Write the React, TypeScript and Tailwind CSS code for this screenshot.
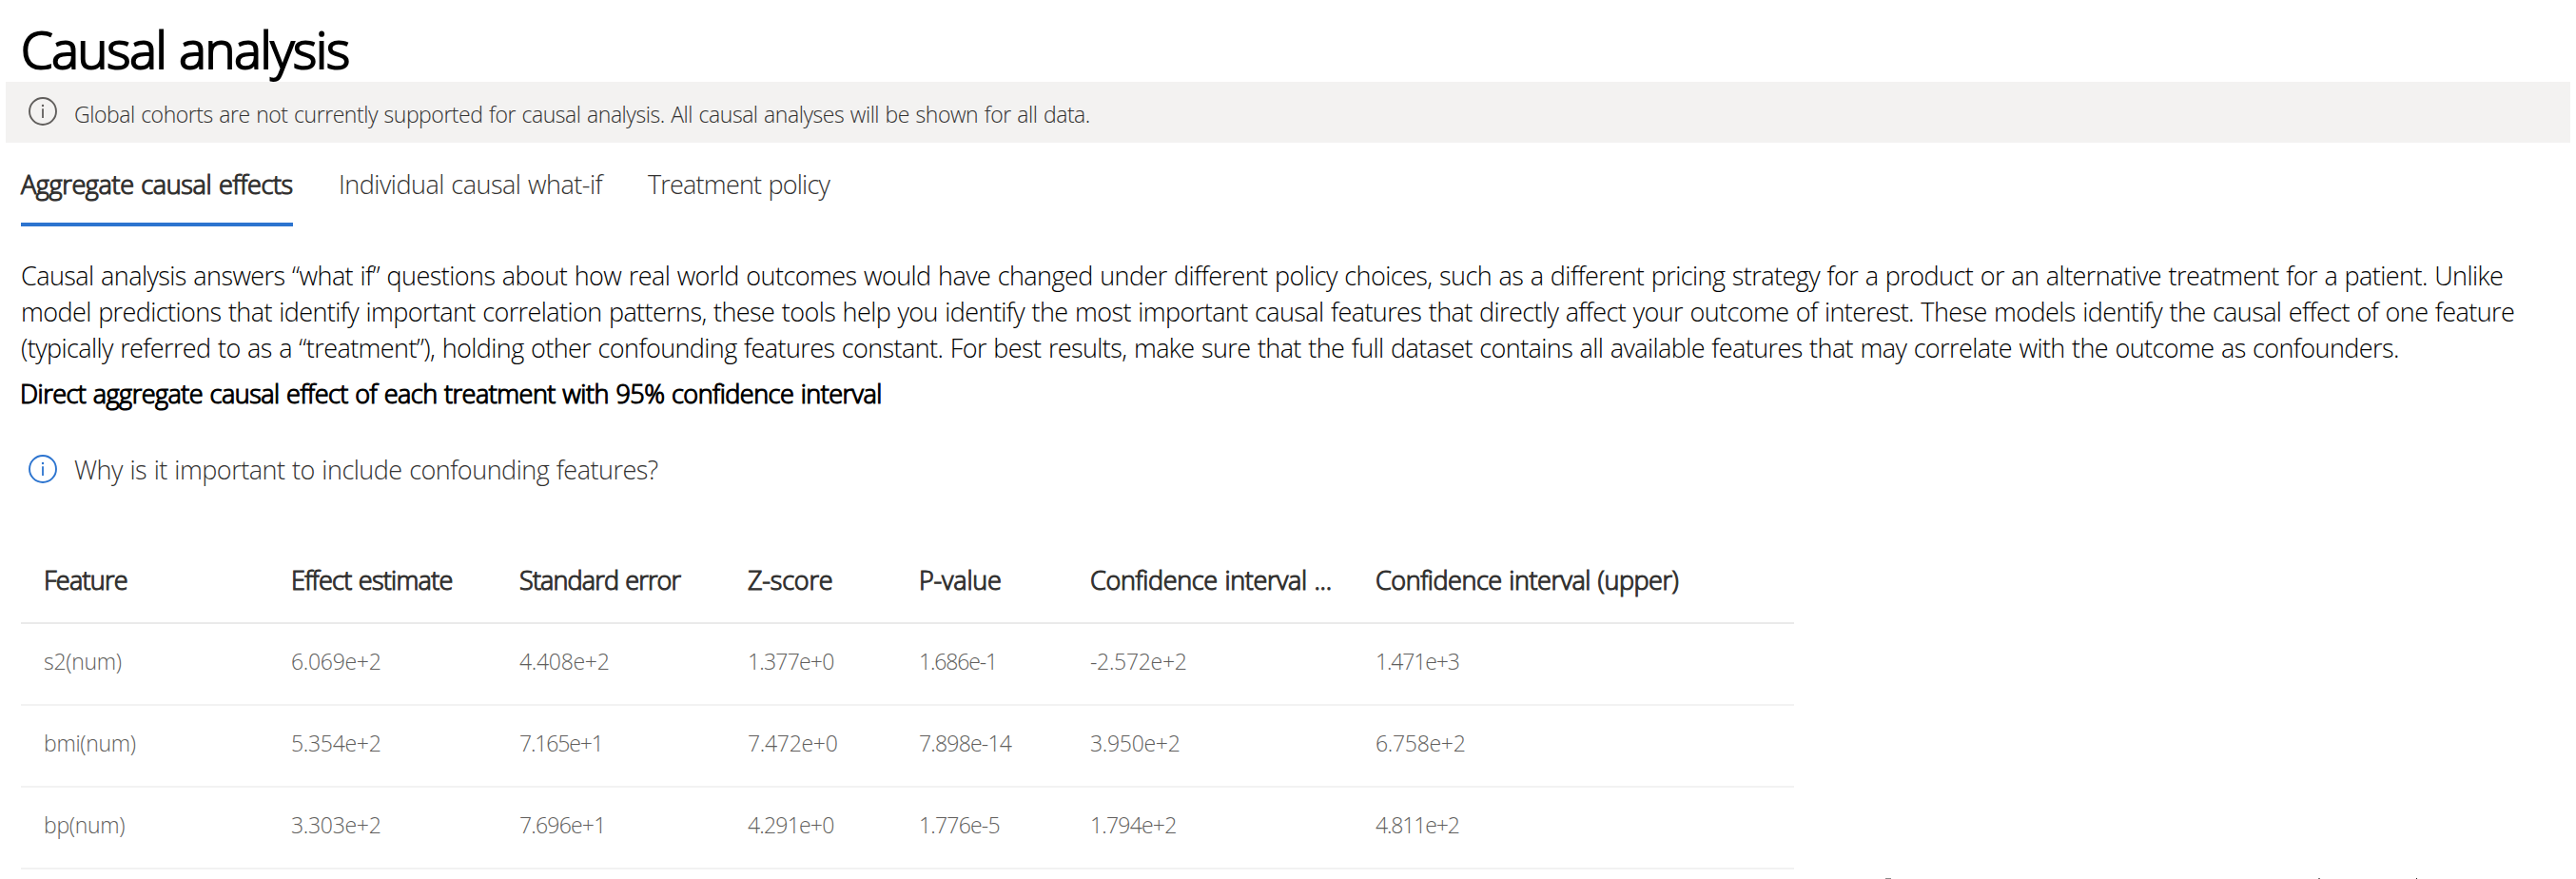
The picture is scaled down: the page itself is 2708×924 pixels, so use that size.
type Cell = { text: string; tracking: string };

const columns: Cell[] = [
  { text: "Feature", tracking: "tracking-[-0.75px]" },
  { text: "Effect estimate", tracking: "tracking-[-0.72px]" },
  { text: "Standard error", tracking: "tracking-[-0.85px]" },
  { text: "Z-score", tracking: "tracking-[-0.2px]" },
  { text: "P-value", tracking: "tracking-[-0.2px]" },
  { text: "Confidence interval ...", tracking: "tracking-[-0.35px]" },
  { text: "Confidence interval (upper)", tracking: "tracking-[-0.45px]" },
];

const rows: string[][] = [
  ["s2(num)", "6.069e+2", "4.408e+2", "1.377e+0", "1.686e-1", "-2.572e+2", "1.471e+3"],
  ["bmi(num)", "5.354e+2", "7.165e+1", "7.472e+0", "7.898e-14", "3.950e+2", "6.758e+2"],
  ["bp(num)", "3.303e+2", "7.696e+1", "4.291e+0", "1.776e-5", "1.794e+2", "4.811e+2"],
];

const digitTracking = ["tracking-[-0.3px]", "tracking-[-0.8px]", "tracking-[-1.15px]"];

const gridColumns = "grid grid-cols-[260px_240px_240px_180px_180px_300px_1fr] pl-6";

function trackingFor(value: string) {
  const ones = value.split("1").length - 1;
  return digitTracking[Math.min(ones, 2)];
}

function InfoIcon({ className }: { className: string }) {
  return (
    <svg viewBox="0 0 30 30" className={`size-[30px] shrink-0 ${className}`} fill="none" stroke="currentColor">
      <circle cx="15" cy="15" r="14" strokeWidth="1.9" />
      <path d="M15 12.2V22" strokeWidth="1.8" />
      <circle cx="15" cy="9" r="1.2" fill="currentColor" stroke="none" />
    </svg>
  );
}

export default function App() {
  return (
    <main className="flex h-[924px] w-[2708px] flex-col overflow-hidden bg-white font-['Open_Sans',sans-serif] text-[27px] leading-[38px] font-light text-[#323130] [word-spacing:1px]">
      <h1 className="mt-4 h-[70px] pl-[22px] text-[54px] leading-[70px] font-light tracking-[-1.25px] whitespace-nowrap text-black [-webkit-text-stroke:2.1px]">
        Causal analysis
      </h1>
      <div className="mx-[6px] flex h-16 shrink-0 items-start bg-[#f3f2f1] pl-6 text-[23px] leading-8 tracking-[-0.46px]">
        <InfoIcon className="mt-4 text-[#605e5c]" />
        <span className="mt-[18px] ml-[18px]">
          Global cohorts are not currently supported for causal analysis. All causal analyses will be shown for all data.
        </span>
      </div>

      <nav className="mt-6 flex h-16 shrink-0 pl-[22px] whitespace-nowrap">
        <div className="w-[286px] border-b-4 border-[#2c74cf] pt-px tracking-[-0.35px] [-webkit-text-stroke:1.15px]">Aggregate causal effects</div>
        <div className="ml-[48px] w-[278px] pt-px tracking-[-0.5px]">Individual causal what-if</div>
        <div className="ml-[47px] pt-px tracking-[-0.8px]">Treatment policy</div>
      </nav>

      <p className="mt-[33px] pl-[22px] whitespace-nowrap text-black">
        <span className="block tracking-[-0.565px]">
          Causal analysis answers “what if” questions about how real world outcomes would have changed under different policy choices, such as a different pricing strategy for a product or an alternative treatment for a patient. Unlike
        </span>
        <span className="block tracking-[-0.595px]">
          model predictions that identify important correlation patterns, these tools help you identify the most important causal features that directly affect your outcome of interest. These models identify the causal effect of one feature
        </span>
        <span className="block tracking-[-0.595px]">
          (typically referred to as a “treatment”), holding other confounding features constant. For best results, make sure that the full dataset contains all available features that may correlate with the outcome as confounders.
        </span>
      </p>
      <h2 className="mt-[10px] pl-[21px] font-light tracking-[-0.51px] text-black [-webkit-text-stroke:1.15px]">
        Direct aggregate causal effect of each treatment with 95% confidence interval
      </h2>

      <div className="mt-[45px] flex h-[30px] shrink-0 items-center pl-[30px] tracking-[-0.5px]">
        <InfoIcon className="text-[#2c74cf]" />
        <span className="ml-[18px] pt-[2px]">Why is it important to include confounding features?</span>
      </div>

      <section className="mt-[57px] ml-[22px] w-[1864px]">
        <div className={`${gridColumns} h-[91px] items-center border-b-2 border-[#eaeaea] pt-px whitespace-nowrap [-webkit-text-stroke:1.1px]`}>
          {columns.map((c) => (
            <div key={c.text} className={c.tracking}>{c.text}</div>
          ))}
        </div>
        {rows.map((row) => (
          <div key={row[0]} className={`${gridColumns} h-[86px] items-center border-b-2 border-[#f2f2f2] pb-[6px] text-[23px] leading-8 text-[#605e5c]`}>
            {row.map((value) => (
              <div key={value} className={trackingFor(value)}>{value}</div>
            ))}
          </div>
        ))}
      </section>

      <div className="mt-auto flex h-px shrink-0 pl-[1982px]">
        <span className="h-px w-[6px] bg-[#8a8a8a]" />
        <span className="ml-[449px] h-px w-[2px] bg-[#777777]" />
        <span className="ml-[101px] h-px w-px bg-[#222222]" />
      </div>
    </main>
  );
}
